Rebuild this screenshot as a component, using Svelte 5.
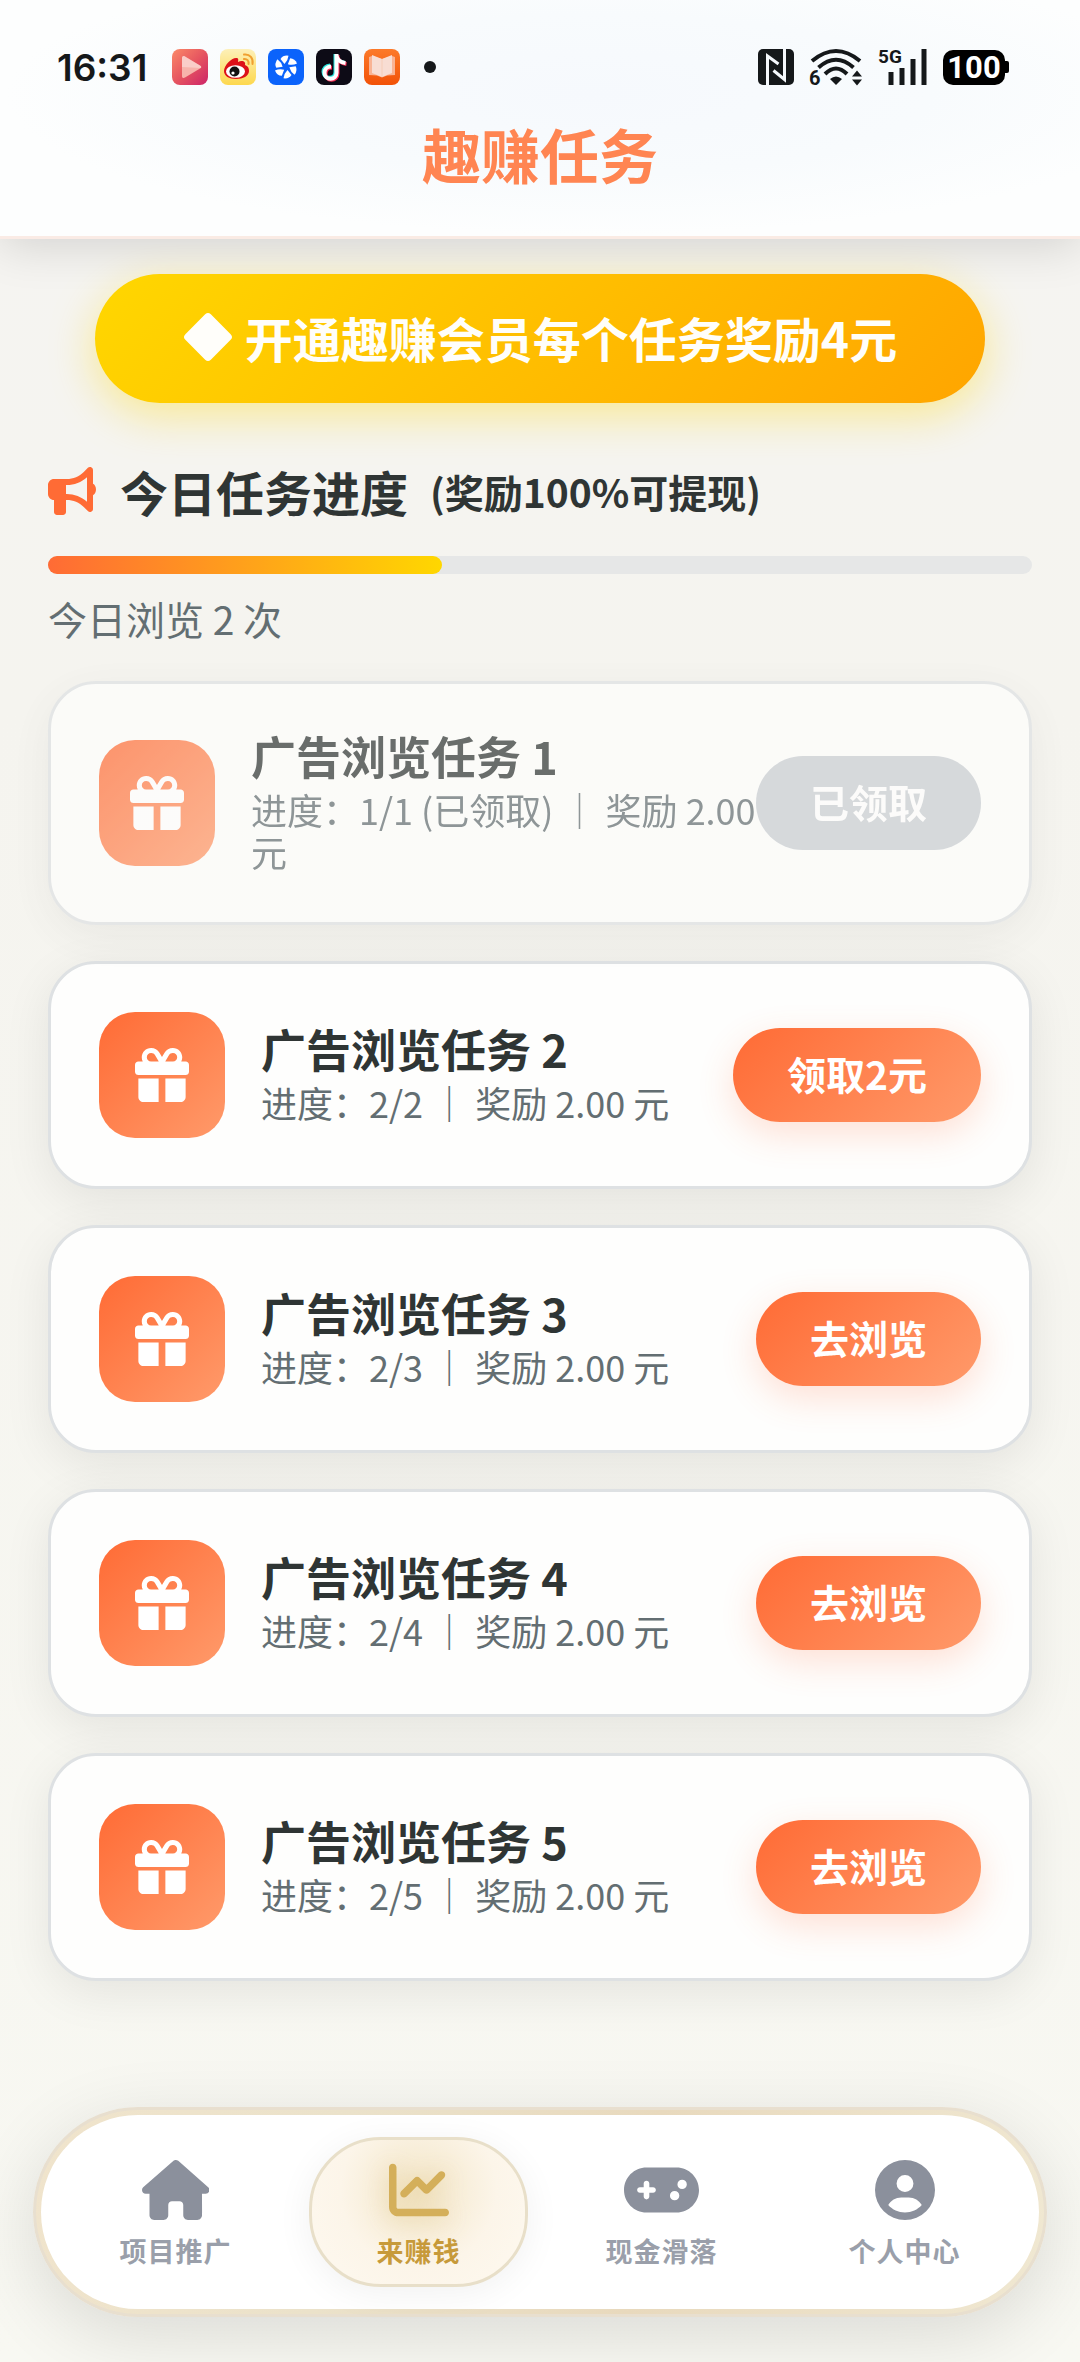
<script lang="ts">
	type Task = { id: number; progress: string; action: string; claimed?: boolean };

	const tasks: Task[] = [
		{ id: 1, progress: '1/1 (已领取)', action: '已领取', claimed: true },
		{ id: 2, progress: '2/2', action: '领取2元' },
		{ id: 3, progress: '2/3', action: '去浏览' },
		{ id: 4, progress: '2/4', action: '去浏览' },
		{ id: 5, progress: '2/5', action: '去浏览' }
	];

	const viewed = 2;
	const total = 5;

	const tabs = [
		{
			label: '项目推广',
			width: 576,
			icon: 'M575.8 255.5c0 18-15 32.1-32 32.1h-32l.7 160.2c0 2.7-.2 5.4-.5 8.1V472c0 22.1-17.9 40-40 40H392c-22.1 0-40-17.9-40-40V384c0-17.7-14.3-32-32-32H256c-17.7 0-32 14.3-32 32v88c0 22.1-17.9 40-40 40H104c-22.1 0-40-17.9-40-40V287.6H32c-18 0-32-14-32-32.1c0-9 3-17 10-24L266.4 8c7-7 15-8 22-8s15 2 21 7L564.8 231.5c8 7 12 15 11 24z'
		},
		{
			label: '来赚钱',
			width: 512,
			icon: 'M64 64c0-17.7-14.3-32-32-32S0 46.3 0 64V400c0 44.2 35.8 80 80 80H480c17.7 0 32-14.3 32-32s-14.3-32-32-32H80c-8.8 0-16-7.2-16-16V64zm406.6 86.6c12.5-12.5 12.5-32.8 0-45.3s-32.8-12.5-45.3 0L320 210.7l-57.4-57.4c-12.5-12.5-32.8-12.5-45.3 0l-112 112c-12.5 12.5-12.5 32.8 0 45.3s32.8 12.5 45.3 0L240 221.3l57.4 57.4c12.5 12.5 32.8 12.5 45.3 0l128-128z'
		},
		{
			label: '现金滑落',
			width: 640,
			icon: 'M192 64C86 64 0 150 0 256S86 448 192 448H448c106 0 192-86 192-192s-86-192-192-192H192zM496 168a40 40 0 1 1 0 80 40 40 0 1 1 0-80zM392 304a40 40 0 1 1 80 0 40 40 0 1 1 -80 0zM168 200c0-13.3 10.7-24 24-24s24 10.7 24 24v32h32c13.3 0 24 10.7 24 24s-10.7 24-24 24H216v32c0 13.3-10.7 24-24 24s-24-10.7-24-24V280H136c-13.3 0-24-10.7-24-24s10.7-24 24-24h32V200z'
		},
		{
			label: '个人中心',
			width: 512,
			icon: 'M399 384.2C376.9 345.8 335.4 320 288 320H224c-47.4 0-88.9 25.8-111 64.2c35.2 39.2 86.2 63.8 143 63.8s107.8-24.7 143-63.8zM0 256a256 256 0 1 1 512 0A256 256 0 1 1 0 256zm256 16a72 72 0 1 0 0-144 72 72 0 1 0 0 144z'
		}
	];

	let active = $state(1);
</script>

<div class="page">
	<header>
		<div class="status-bar">
			<span class="clock">16:31</span>
			<div class="apps">
				<svg viewBox="0 0 36 36">
					<defs>
						<linearGradient id="video" x1="0" y1="0" x2="1" y2="1">
							<stop offset="0" stop-color="#fb8a68" />
							<stop offset="0.5" stop-color="#e65560" />
							<stop offset="1" stop-color="#cc2468" />
						</linearGradient>
					</defs>
					<rect width="36" height="36" rx="8" fill="url(#video)" />
					<path d="M10 9c0-2 1.500-2.500 3-1.600l15 9c1.700 1 1.700 2.200 0 3.200l-15 9c-1.500.9-3 .4-3-1.600z" fill="#f7b3ab" />
					<path d="M10 9c0-2 1.500-2.500 3-1.600l15 9c1 .6 1.500 1.500 1 2.500L10 18z" fill="#fff" opacity="0.35" />
				</svg>
				<svg viewBox="0 0 36 36">
					<defs>
						<linearGradient id="feed" x1="0" y1="0" x2="0" y2="1">
							<stop offset="0" stop-color="#fdf0b8" />
							<stop offset="1" stop-color="#fdd84e" />
						</linearGradient>
					</defs>
					<rect width="36" height="36" rx="8" fill="url(#feed)" />
					<path d="M4 22c0-6 8-14 13-13 2 .5 1 3 1 4 3-1.500 8-1.500 7 3 3 1 4 3 4 6 0 5-6 8-13 8S4 27 4 22z" fill="#dd1018" />
					<ellipse cx="15.500" cy="22.500" rx="9.500" ry="6.300" fill="#fff" />
					<circle cx="14.500" cy="22.500" r="5" fill="#111" />
					<circle cx="13" cy="24" r="1.600" fill="#fff" />
					<path d="M24 10c3-.5 5 2 4.500 5M24 5.500c6-.8 9.500 4 8.500 9.500" fill="none" stroke="#f0a030" stroke-width="2" stroke-linecap="round" />
				</svg>
				<svg viewBox="0 0 36 36">
					<rect width="36" height="36" rx="8" fill="#0b63fb" />
					<g fill="#fff">
						{#each [0, 60, 120, 180, 240, 300] as angle}
							<path d="M16.500 15L12.500 10Q15 6 20.500 6.700Q20 11.500 16.500 15z" transform="rotate({angle} 18 18)" />
						{/each}
					</g>
				</svg>
				<svg viewBox="0 0 36 36">
					<rect width="36" height="36" rx="8" fill="#0d0b16" />
					<g fill="none" stroke-width="4">
						<path d="M14 16.500c-4 0-6.500 3-6.500 6.300s2.700 6 6 6 6-2.600 6-6V5M19.500 7c1 4 4.500 6 8.500 6.500" stroke="#27e4dd" />
						<path d="M16 18.500c-4 0-6.500 3-6.500 6.300s2.700 6 6 6 6-2.600 6-6V6M21.500 8c1 4 4.500 6.500 9 7" stroke="#fb2d55" />
						<path d="M15 17.500c-4 0-6.500 3-6.500 6.300s2.700 6 6 6 6-2.600 6-6V5M20.500 7c1 4 4.500 6.500 9 7" stroke="#fff" />
					</g>
				</svg>
				<svg viewBox="0 0 36 36">
					<defs>
						<linearGradient id="book" x1="0" y1="0" x2="0" y2="1">
							<stop offset="0" stop-color="#fc7a2a" />
							<stop offset="1" stop-color="#f25208" />
						</linearGradient>
					</defs>
					<rect width="36" height="36" rx="8" fill="url(#book)" />
					<path d="M5 8l3-1 10 3 10-3 3 1v18l-8 .5-5 2-5-2-8-.5z" fill="#f9b394" />
					<path d="M8 6l10 4v18l-10-4zM28 6l-10 4v18l10-4z" fill="#f8ddd3" />
					<path d="M18 10v18" stroke="#f6cdb8" />
				</svg>
			</div>
			<span class="more"></span>
			<div class="signals">
				<svg width="36" height="36" viewBox="0 0 36 36">
					<rect width="36" height="36" rx="5" fill="#15181a" />
					<path d="M9.500 36V7l11 8M26.500 0v30.500l-11-9" fill="none" stroke="#f5f8fc" stroke-width="3" />
				</svg>
				<svg width="54" height="38" viewBox="0 0 54 38">
					<g fill="none" stroke="#15181a" stroke-width="4">
						<path d="M3 13Q27-7 51 13" />
						<path d="M9.500 19.500Q27 4 44.500 19.500" />
						<path d="M16 26Q27 15 38 26" />
					</g>
					<path d="M21 31q6-5 12 0l-6 6z" fill="#15181a" />
					<path d="M43 28.500l5-6 5 6zM43 31.500l5 6 5-6z" fill="#15181a" />
					<text x="0" y="37" font-size="20">6</text>
				</svg>
				<svg width="50" height="38" viewBox="0 0 50 38">
					<text x="0" y="15" font-size="19">5G</text>
					<path d="M13 37V24M24 37V20M35 37V11M46 37V1" stroke="#15181a" stroke-width="5" />
				</svg>
				<span class="battery">100</span>
			</div>
		</div>
		<h1>趣赚任务</h1>
	</header>

	<main>
		<button class="vip" type="button">
			<svg width="50" height="50" viewBox="0 0 50 50">
				<rect x="7" y="7" width="36" height="36" rx="4" fill="currentColor" transform="rotate(45 25 25)" />
			</svg>
			开通趣赚会员每个任务奖励4元
		</button>

		<section class="progress">
			<h2>
				<svg width="48" height="48" viewBox="0 0 512 512">
					<path fill="currentColor" d="M480 32c0-12.900-7.800-24.600-19.800-29.600s-25.700-2.200-34.900 6.900L381.700 53c-48 48-113.100 75-181 75H64c-35.300 0-64 28.700-64 64v96c0 35.300 28.700 64 64 64V480c0 17.700 14.300 32 32 32h64c17.700 0 32-14.300 32-32V352h8.700c67.900 0 133 27 181 75l43.600 43.600c9.200 9.200 22.900 11.900 34.900 6.900s19.800-16.600 19.800-29.600V300.400c18.600-8.800 32-32.500 32-60.400s-13.400-51.600-32-60.400V32zm-64 76.700V371.300C357.200 317.800 280.500 288 200.700 288H192V192h8.700c79.800 0 156.500-29.800 215.300-83.300z" />
				</svg>
				今日任务进度
				<small>(奖励100%可提现)</small>
			</h2>
			<div class="track" role="progressbar" aria-valuenow={viewed} aria-valuemax={total} aria-label="今日任务进度">
				<div class="fill" style="width: {(viewed / total) * 100}%"></div>
			</div>
			<p>今日浏览 {viewed} 次</p>
		</section>

		<ul class="tasks">
			{#each tasks as task}
				<li class="card" class:claimed={task.claimed}>
					<div class="gift">
						<svg width="54" height="54" viewBox="0 0 512 512">
							<path fill="currentColor" d="M190.500 68.800L225.300 128H152c-22.100 0-40-17.900-40-40s17.900-40 40-40h2.200c14.900 0 28.800 7.900 36.300 20.800zM64 88c0 14.400 3.500 28 9.600 40H32c-17.700 0-32 14.300-32 32v64c0 17.700 14.300 32 32 32H480c17.700 0 32-14.300 32-32V160c0-17.700-14.300-32-32-32H438.400c6.100-12 9.600-25.600 9.600-40c0-48.600-39.400-88-88-88h-2.200c-31.900 0-61.500 16.900-77.700 44.400L256 85.500l-24.100-41C215.700 16.900 186.100 0 154.200 0H152C103.400 0 64 39.400 64 88zm336 0c0 22.100-17.900 40-40 40H286.700l34.800-59.200C329.100 55.900 342.900 48 357.800 48H360c22.100 0 40 17.900 40 40zM32 288V464c0 26.500 21.500 48 48 48H224V288H32zM288 512H432c26.500 0 48-21.500 48-48V288H288V512z" />
						</svg>
					</div>
					<div class="info">
						<h3>广告浏览任务 {task.id}</h3>
						<p>进度：{task.progress} ｜ 奖励 2.00 元</p>
					</div>
					<button class="action" type="button" disabled={task.claimed}>{task.action}</button>
				</li>
			{/each}
		</ul>
	</main>

	<nav>
		<div class="tabs">
			{#each tabs as tab, i}
				<button class="tab" class:active={active === i} type="button" onclick={() => (active = i)}>
					<svg height="60" viewBox="0 0 {tab.width} 512">
						<path fill="currentColor" d={tab.icon} />
					</svg>
					<span>{tab.label}</span>
				</button>
			{/each}
		</div>
	</nav>
</div>

<style>
	:global(body) {
		margin: 0;
		background: #f7f7f3;
	}

	.page {
		display: flex;
		flex-direction: column;
		min-height: 100vh;
		background: linear-gradient(180deg, #f5f4f2 0%, #f5f4ef 30%, #f8f8f2 100%);
		color: #2f3534;
		font-family: 'Noto Sans CJK SC', sans-serif;
	}

	h1,
	h2,
	h3,
	p,
	ul {
		margin: 0;
		padding: 0;
	}

	button {
		border: 0;
		font-family: inherit;
		cursor: pointer;
	}

	svg {
		flex-shrink: 0;
	}

	header {
		border-bottom: 3px solid #faebe5;
		background: radial-gradient(ellipse at 55% 40%, #f6f9fd 0%, #f8fbfd 40%, #fdfefe 70%);
		box-shadow: 0 6px 45px rgba(0, 0, 0, 0.14);
	}

	.status-bar {
		display: flex;
		align-items: center;
		height: 86px;
		padding: 24px 75px 0 57px;
		color: #15181a;
	}

	.clock {
		width: 115px;
		font-family: Inter, sans-serif;
		font-size: 37px;
		font-weight: 600;
	}

	.apps {
		display: flex;
		gap: 12px;
	}

	.apps svg {
		width: 36px;
		height: 36px;
	}

	.more {
		width: 12px;
		height: 12px;
		margin-left: 24px;
		border-radius: 50%;
		background: #15181a;
	}

	.signals {
		display: flex;
		align-items: center;
		gap: 15px;
		margin-left: auto;
	}

	.signals svg {
		overflow: visible;
	}

	.signals text {
		fill: #15181a;
		font-family: Roboto, sans-serif;
		font-weight: 700;
	}

	.battery {
		position: relative;
		width: 62px;
		border-radius: 10px;
		background: #000;
		color: #fff;
		font-family: Roboto, sans-serif;
		font-size: 31px;
		font-weight: 700;
		line-height: 35px;
		text-align: center;
	}

	.battery::after {
		content: '';
		position: absolute;
		top: 11px;
		right: -4px;
		width: 6px;
		height: 12px;
		border-radius: 2px;
		background: #000;
	}

	h1 {
		padding: 0 0 38px;
		color: #ff8552;
		font-size: 59px;
		font-weight: 700;
		line-height: 88px;
		text-align: center;
	}

	main {
		padding: 35px 48px 0;
	}

	.vip {
		display: flex;
		align-items: center;
		justify-content: center;
		gap: 12px;
		width: calc(100% - 94px);
		height: 129px;
		margin: 0 auto;
		padding: 0 6px 4px;
		border-radius: 66px;
		background: linear-gradient(135deg, #ffd700, #ffa500);
		box-shadow: 0 12px 45px rgba(255, 215, 0, 0.4);
		color: #fffefa;
		font-size: 48px;
		font-weight: 700;
	}

	.progress {
		padding: 58px 0 41px;
	}

	h2 {
		display: flex;
		align-items: center;
		margin-bottom: 35px;
		font-size: 48px;
		font-weight: 700;
		line-height: 60px;
	}

	h2 svg {
		margin-right: 24px;
		color: #ff6b35;
	}

	h2 small {
		margin-left: 22px;
		font-size: 39px;
	}

	.track {
		height: 18px;
		border-radius: 9px;
		background: #e6e7e7;
	}

	.fill {
		height: 100%;
		border-radius: 9px;
		background: linear-gradient(90deg, #ff6b35, #ffd700);
	}

	.progress p {
		margin-top: 22px;
		color: #636e72;
		font-size: 39px;
		line-height: 44px;
	}

	.tasks {
		display: flex;
		flex-direction: column;
		gap: 36px;
		list-style: none;
	}

	.card {
		display: flex;
		align-items: center;
		padding: 48px;
		border: 3px solid #dee1e3;
		border-radius: 48px;
		background: #fefefd;
		box-shadow: 0 12px 48px rgba(0, 0, 0, 0.08);
	}

	.claimed {
		opacity: 0.7;
	}

	.gift {
		display: flex;
		align-items: center;
		justify-content: center;
		width: 126px;
		height: 126px;
		min-width: 0;
		margin-right: 36px;
		border-radius: 36px;
		background: linear-gradient(135deg, #ff6b35, #ff9a6a);
		color: #fff;
	}

	.info {
		padding-bottom: 2px;
	}

	.info h3 {
		margin-bottom: 8px;
		font-size: 45px;
		font-weight: 600;
		line-height: 48px;
	}

	.info p {
		color: #636e72;
		font-size: 36px;
		line-height: 42px;
	}

	.action {
		flex-shrink: 0;
		height: 94px;
		margin-left: auto;
		padding: 0 54px 4px;
		border-radius: 48px;
		background: linear-gradient(135deg, #ff6b35, #ff9a6a);
		box-shadow: 0 12px 36px rgba(255, 107, 53, 0.2);
		color: #fff;
		font-size: 39px;
		font-weight: 600;
	}

	.action:disabled {
		background: #c9ced3;
		box-shadow: none;
		cursor: default;
	}

	nav {
		margin: auto 33px 45px;
		padding: 5px;
		border: 3px solid #e8dfcf;
		border-radius: 105px;
		background: linear-gradient(100deg, #f0e4cc, #ebe2ca 30%, #e8d9bd 60%, #f0e8d2);
		box-shadow: 0 18px 72px rgba(0, 0, 0, 0.12);
	}

	.tabs {
		display: grid;
		grid-template-columns: repeat(4, 1fr);
		padding: 22px 13px;
		border-radius: 97px;
		background: #fff;
	}

	.tab {
		display: flex;
		flex-direction: column;
		align-items: center;
		gap: 14px;
		height: 150px;
		margin: 0 12px;
		padding: 20px 0 0;
		border: 3px solid transparent;
		border-radius: 72px;
		background: none;
		color: #8b909c;
	}

	.tab span {
		color: #9a9faa;
		font-size: 27px;
		font-weight: 600;
		line-height: 34px;
		letter-spacing: 1px;
	}

	.tab.active {
		border-color: #e8dfc9;
		background: radial-gradient(circle at 50% 35%, #f3e6c8 0%, #fcf5e9 55%, #fef9f0 100%);
		box-shadow: 0 6px 36px rgba(0, 0, 0, 0.06);
		color: #d4af5a;
	}

	.tab.active svg {
		filter: drop-shadow(0 3px 12px rgba(212, 175, 90, 0.4));
	}

	.tab.active span {
		color: #c79a3a;
	}
</style>
